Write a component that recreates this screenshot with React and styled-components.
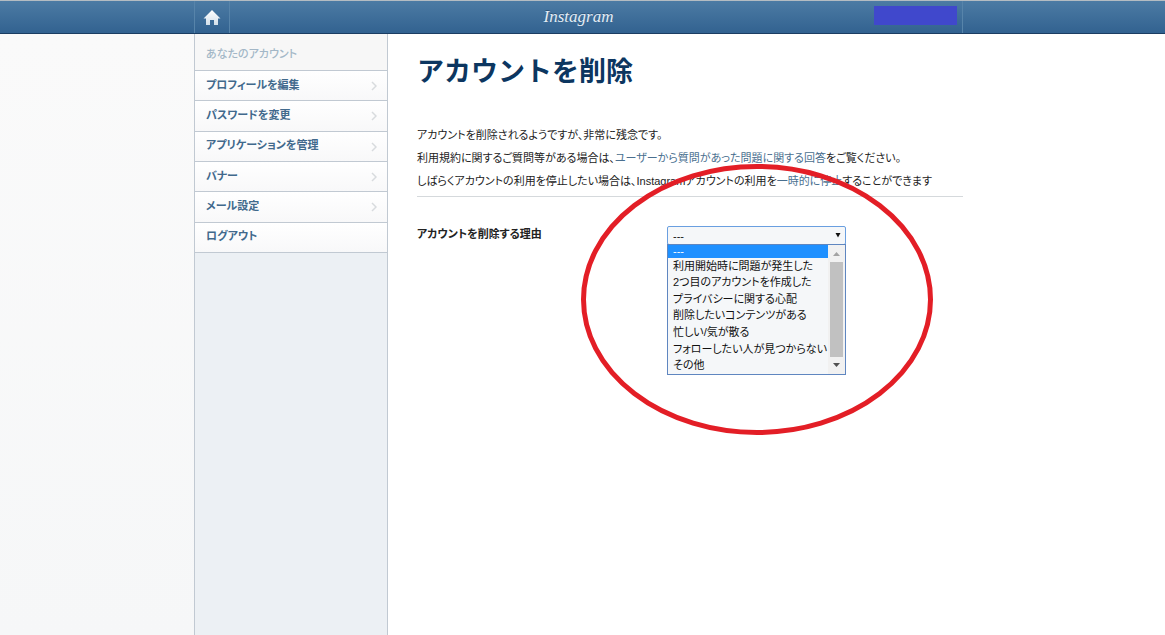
import React, { Component } from 'react';
import styled, { createGlobalStyle } from 'styled-components';

const GlobalStyle = createGlobalStyle`
	* {
		box-sizing: border-box;
	}
	body {
		margin: 0;
		background: #fff;
		color: #222;
		font-family: 'Liberation Sans', 'Noto Sans CJK JP', sans-serif;
		font-feature-settings: 'palt';
		font-size: 11px;
	}
	h1, h2, p, ul {
		margin: 0;
		padding: 0;
	}
	ul {
		list-style: none;
	}
	a {
		color: #4a6f8f;
		text-decoration: none;
	}
`;

const Page = styled('div')`
	min-height: 100vh;
	display: flex;
	flex-direction: column;
`;

const Header = styled('header')`
	height: 34px;
	padding-right: 8px;
	display: flex;
	justify-content: center;
	background: linear-gradient(#4c7ba4, #326290);
	border-top: 1px solid #b4bcc2;
	border-bottom: 1px solid #1b3d62;
`;

const HeaderInner = styled('div')`
	flex: 0 1 769px;
	display: grid;
	grid-template-columns: 1fr auto 1fr;
	align-items: center;
	border-left: 1px solid #5784aa;
	border-right: 1px solid #5784aa;
`;

const HomeLink = styled('a')`
	width: 35px;
	height: 32px;
	display: flex;
	align-items: center;
	justify-content: center;
	border-right: 1px solid #5784aa;
`;

const Logo = styled('a')`
	color: #e3edf5;
	font-family: 'Liberation Serif', serif;
	font-size: 17px;
	line-height: 30px;
	font-style: italic;
	text-shadow: 0 -1px 0 #2b5379;
`;

const AccountName = styled('span')`
	justify-self: end;
	align-self: start;
	width: 83px;
	height: 19px;
	margin: 5px 5px 0 0;
	background: #4048cc;
`;

const Columns = styled('div')`
	flex: 1;
	padding-right: 8px;
	display: grid;
	grid-template-columns: 1fr 194px minmax(0, 575px) 1fr;
`;

const Gutter = styled('div')`
	background: linear-gradient(#fafafa, #f6f7f8);
`;

const Sidebar = styled('nav')`
	background: #ecf0f4;
	border-left: 1px solid #c1c9d2;
	border-right: 1px solid #c1c9d2;
`;

const SidebarTitle = styled('h2')`
	height: 37px;
	padding: 0 11px;
	background: #f7f7f7;
	border-bottom: 1px solid #c1c9d2;
	color: #a3b7c7;
	font-size: 11px;
	font-weight: 500;
	line-height: 40px;
`;

const Menu = styled('ul')`
	display: grid;
	grid-auto-rows: 1fr;
	min-height: 182px;
`;

const MenuItem = styled('li')`
	display: flex;
	background: linear-gradient(#fff, #f8f8f9);
	border-bottom: 1px solid #c1c9d2;
`;

const MenuLink = styled('a')`
	flex: 1;
	padding: 0 10px 4px 11px;
	display: flex;
	align-items: center;
	justify-content: space-between;
	color: #41698c;
	font-weight: bold;

	svg {
		margin-top: 5px;
	}
`;

const Content = styled('main')`
	padding: 16px 0 40px 29px;
`;

const Title = styled('h1')`
	color: #0c3660;
	font-size: 27px;
	font-weight: bold;
	font-feature-settings: normal;
	line-height: 44px;
`;

const Intro = styled('div')`
	margin-top: 30px;
	padding-bottom: 3px;
	border-bottom: 1px solid #d5d9dc;
	line-height: 23px;
`;

const FormRow = styled('div')`
	margin-top: 29px;
	display: grid;
	grid-template-columns: 250px 179px;
	align-items: start;
`;

const Label = styled('label')`
	font-weight: bold;
	line-height: 17px;
`;

const Field = styled('div')`
	position: relative;
`;

const Select = styled('select')`
	display: block;
	width: 100%;
	height: 19px;
	padding: 0 5px;
	appearance: none;
	background: #f5f7f9;
	border: 1px solid #6a9fe0;
	border-radius: 2px;
	color: #111;
	font: inherit;
	outline: 0;
`;

const SelectArrow = styled('svg')`
	position: absolute;
	top: 7px;
	right: 5px;
	pointer-events: none;
`;

const Dropdown = styled('div')`
	position: absolute;
	top: 18px;
	left: 0;
	right: 0;
	height: 131px;
	display: grid;
	grid-template-columns: minmax(0, 1fr) 17px;
	background: #f5f7f9;
	border: 1px solid #5f86c0;
`;

const Options = styled('ul')`
	display: grid;
	grid-template-rows: 13px repeat(7, 1fr);
	overflow: hidden;
`;

const Option = styled('li')`
	padding-left: 5px;
	display: flex;
	align-items: center;
	background: ${({ $selected }) => ($selected ? '#1e90ff' : 'transparent')};
	color: ${({ $selected }) => ($selected ? '#fff' : '#111')};
	font-size: 11px;
	line-height: 13px;
	white-space: nowrap;
`;

const Scrollbar = styled('div')`
	display: flex;
	flex-direction: column;
	align-items: center;
	background: #f1f1f1;
`;

const ScrollArrow = styled('svg')`
	flex: none;
	width: 17px;
	height: 17px;
`;

const ScrollThumb = styled('div')`
	flex: 1;
	width: 13px;
	background: #c1c1c1;
`;

const Circle = styled('svg')`
	position: absolute;
	top: -62px;
	left: -86px;
	pointer-events: none;
`;

const menu = [
	{ title: 'プロフィールを編集', arrow: true },
	{ title: 'パスワードを変更', arrow: true },
	{ title: 'アプリケーションを管理', arrow: true },
	{ title: 'バナー', arrow: true },
	{ title: 'メール設定', arrow: true },
	{ title: 'ログアウト', arrow: false },
];

const reasons = [
	'---',
	'利用開始時に問題が発生した',
	'2つ目のアカウントを作成した',
	'プライバシーに関する心配',
	'削除したいコンテンツがある',
	'忙しい/気が散る',
	'フォローしたい人が見つからない',
	'その他',
];

const HomeIcon = () => (
	<svg width="18" height="16" viewBox="0 0 18 16">
		<defs>
			<linearGradient id="home" x1="0" y1="0" x2="0" y2="1">
				<stop offset="0" stopColor="#fff" />
				<stop offset="1" stopColor="#d3dfea" />
			</linearGradient>
		</defs>
		<path d="M9 1 L17.5 9.5 H15 V16 H11 V11 H7 V16 H3 V9.5 H0.5 Z" fill="url(#home)" />
	</svg>
);

const Chevron = () => (
	<svg width="6" height="10" viewBox="0 0 6 10">
		<path d="M1 1 L5 5 L1 9" fill="none" stroke="#d8dbde" strokeWidth="1.5" />
	</svg>
);

class App extends Component {
	state = { reason: reasons[0] };

	render = () => {
		const { reason } = this.state;
		return (
			<Page>
				<GlobalStyle />
				<Header>
					<HeaderInner>
						<HomeLink href="#" aria-label="ホーム"><HomeIcon /></HomeLink>
						<Logo href="#">Instagram</Logo>
						<AccountName />
					</HeaderInner>
				</Header>
				<Columns>
					<Gutter />
					<Sidebar>
						<SidebarTitle>あなたのアカウント</SidebarTitle>
						<Menu>
							{menu.map(({ title, arrow }) => (
								<MenuItem key={title}>
									<MenuLink href="#">
										{title}
										{arrow && <Chevron />}
									</MenuLink>
								</MenuItem>
							))}
						</Menu>
					</Sidebar>
					<Content>
						<Title>アカウントを削除</Title>
						<Intro>
							<p>アカウントを削除されるようですが、非常に残念です。</p>
							<p>
								利用規約に関するご質問等がある場合は、<a href="#">ユーザーから質問があった問題に関する回答</a>をご覧ください。
							</p>
							<p>
								しばらくアカウントの利用を停止したい場合は、Instagramアカウントの利用を<a href="#">一時的に停止</a>することができます
							</p>
						</Intro>
						<FormRow>
							<Label htmlFor="reason">アカウントを削除する理由</Label>
							<Field>
								<Select
									id="reason"
									value={reason}
									onChange={(e) => this.setState({ reason: e.target.value })}
								>
									{reasons.map((item) => <option key={item}>{item}</option>)}
								</Select>
								<SelectArrow width="6" height="5" viewBox="0 0 6 5">
									<path d="M0.5 0 H5.5 L3 4.5 Z" fill="#111" />
								</SelectArrow>
								<Dropdown>
									<Options role="listbox" aria-label="アカウントを削除する理由">
										{reasons.map((item) => (
											<Option
												key={item}
												role="option"
												aria-selected={item === reason}
												$selected={item === reason}
												onClick={() => this.setState({ reason: item })}
											>
												{item}
											</Option>
										))}
									</Options>
									<Scrollbar>
										<ScrollArrow viewBox="0 0 17 17">
											<path d="M5 11 L8.5 7 L12 11 Z" fill="#a3a3a3" />
										</ScrollArrow>
										<ScrollThumb />
										<ScrollArrow viewBox="0 0 17 17">
											<path d="M5 6 L8.5 10 L12 6 Z" fill="#505050" />
										</ScrollArrow>
									</Scrollbar>
								</Dropdown>
								<Circle width="352" height="271" viewBox="0 0 352 271">
									<ellipse cx="176" cy="135.5" rx="173.5" ry="133" fill="none" stroke="#e31e26" strokeWidth="5" />
								</Circle>
							</Field>
						</FormRow>
					</Content>
				</Columns>
			</Page>
		)
	}
};

export default App;
